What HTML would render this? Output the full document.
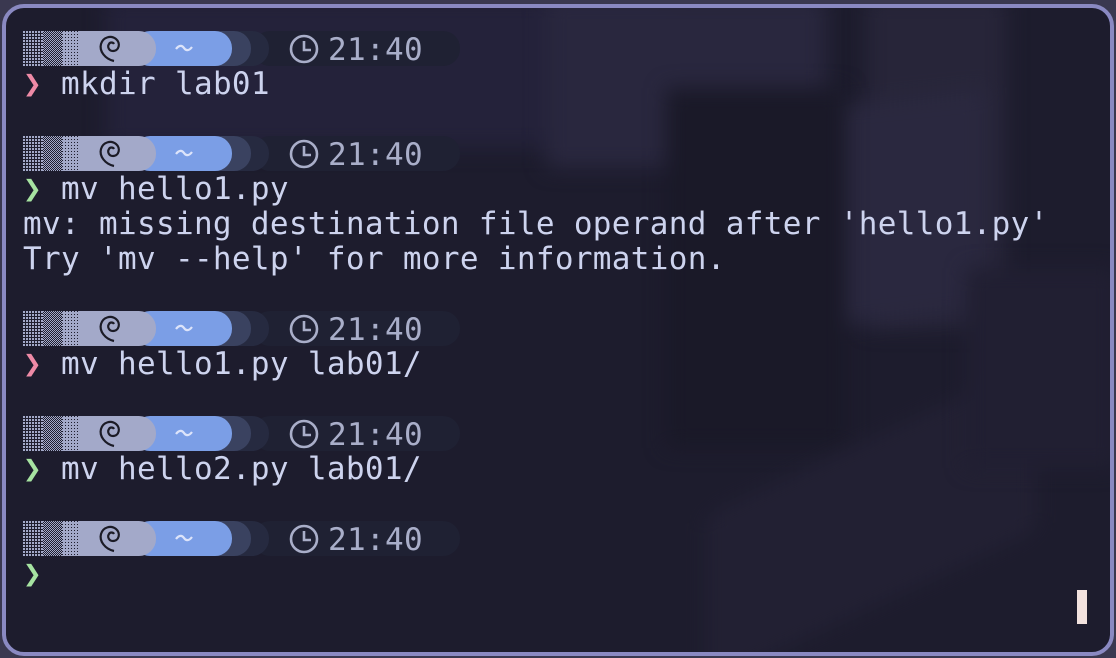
<!DOCTYPE html>
<html><head><meta charset="utf-8"><style>
*{margin:0;padding:0;box-sizing:border-box}
html,body{width:1116px;height:658px;overflow:hidden;background:#3a3850}
.win{position:absolute;left:2px;top:4px;width:1112px;height:652px;border:4px solid #8a89c2;border-radius:22px;overflow:hidden;background:#1d1c2d}
.bg{position:absolute;filter:blur(10px)}
.t{position:absolute;left:23px;font-family:"DejaVu Sans Mono","Liberation Mono",monospace;font-size:31px;letter-spacing:0.33px;line-height:35px;color:#cdd3ee;white-space:pre}
.pl{position:absolute;left:23px;height:35px;width:440px}
</style></head><body>
<div class="win">
 <div class="bg" style="left:100px;top:-10px;width:560px;height:150px;background:#24223a"></div>
 <div class="bg" style="left:540px;top:-10px;width:280px;height:170px;background:#29273e"></div>
 <div class="bg" style="left:860px;top:-10px;width:140px;height:330px;background:#272539"></div>
 <div class="bg" style="left:820px;top:90px;width:160px;height:220px;background:#2a283f;transform:skewY(-6deg)"></div>
 <div class="bg" style="left:660px;top:80px;width:180px;height:360px;background:#1a1928"></div>
 <div class="bg" style="left:700px;top:430px;width:330px;height:170px;background:#222033;transform:skewY(-25deg)"></div>
 <div class="bg" style="left:960px;top:260px;width:150px;height:200px;background:#211f32"></div>
</div>

<svg width="0" height="0" style="position:absolute"><defs>
<pattern id="p1" width="3" height="3" patternUnits="userSpaceOnUse"><rect width="3" height="3" fill="#1f1e2e"/><rect width="2" height="2" fill="#a3a9c9"/></pattern>
<pattern id="p2" width="2" height="2" patternUnits="userSpaceOnUse"><rect width="2" height="2" fill="#1f1e2e"/><rect width="1" height="1" fill="#a3a9c9"/><rect x="1" y="1" width="1" height="1" fill="#a3a9c9"/></pattern>
<pattern id="p3" width="3" height="3" patternUnits="userSpaceOnUse"><rect width="3" height="3" fill="#a3a9c9"/><rect width="1" height="1" fill="#1f1e2e"/></pattern>
<g id="bar">
 <rect x="230" y="0" width="207" height="35" rx="17" fill="#1f2133"/>
 <rect x="180" y="0" width="66" height="35" rx="17" fill="#262a40"/>
 <rect x="160" y="0" width="68" height="35" rx="17" fill="#3a4260"/>
 <rect x="110" y="0" width="99" height="35" rx="17" fill="#7b9ee6"/>
 <rect x="56" y="0" width="77" height="35" rx="17" fill="#a3a9c9"/>
 <rect x="56" y="0" width="30" height="35" fill="#a3a9c9"/>
 <rect x="0" y="0" width="20" height="35" fill="url(#p1)"/>
 <rect x="20" y="0" width="19" height="35" fill="url(#p2)"/>
 <rect x="39" y="0" width="17" height="35" fill="url(#p3)"/>
 <path d="M91 30 C82 28 76 20 78 13 C80 6 88 4 93 8 C98 12 96 20 90 20 C86 20 84 16 86 13 C87 11 90 11 91 13" fill="none" stroke="#1b1b26" stroke-width="2.2"/>
 <path d="M153 18 C156 14 159 14 161 17 C163 20 166 20 169 16" fill="none" stroke="#dde4fa" stroke-width="2.2"/>
 <circle cx="281" cy="18" r="13" fill="none" stroke="#a9aec9" stroke-width="2.6"/>
 <path d="M281 10 V19 H288" fill="none" stroke="#a9aec9" stroke-width="2.6"/>
 <text x="305" y="29" font-family="DejaVu Sans Mono, Liberation Mono, monospace" font-size="31" letter-spacing="0.33" fill="#a9aec9">21:40</text>
</g></defs></svg>

<svg class="pl" style="top:31px"><use href="#bar"/></svg>
<svg class="pl" style="top:136px"><use href="#bar"/></svg>
<svg class="pl" style="top:311px"><use href="#bar"/></svg>
<svg class="pl" style="top:416px"><use href="#bar"/></svg>
<svg class="pl" style="top:521px"><use href="#bar"/></svg>

<div class="t" style="top:67px"><span style="color:#ee8aa6">❯</span> mkdir lab01</div>
<div class="t" style="top:172px"><span style="color:#a6e3a1">❯</span> mv hello1.py</div>
<div class="t" style="top:207px">mv: missing destination file operand after 'hello1.py'</div>
<div class="t" style="top:242px">Try 'mv --help' for more information.</div>
<div class="t" style="top:347px"><span style="color:#ee8aa6">❯</span> mv hello1.py lab01/</div>
<div class="t" style="top:452px"><span style="color:#a6e3a1">❯</span> mv hello2.py lab01/</div>
<div class="t" style="top:557px"><span style="color:#a6e3a1">❯</span></div>
<div style="position:absolute;left:1077px;top:590px;width:10px;height:34px;background:#f2e2de"></div>
</body></html>
